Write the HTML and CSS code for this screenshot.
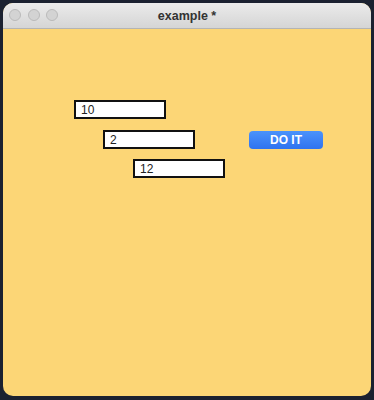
FILE: index.html
```html
<!DOCTYPE html>
<html>
<head>
    <title>example *</title>
    <meta name="viewport" content="width=device-width, initial-scale=1.0">
    <link rel="stylesheet" href="styles.css">
</head>
<body>
    <div class="window">
        <header class="titlebar">
            <div class="lights">
                <span class="light"></span>
                <span class="light"></span>
                <span class="light"></span>
            </div>
            <h1>example *</h1>
        </header>
        <main class="content">
            <div class="row row-1">
                <input class="field" type="text" value="10">
            </div>
            <div class="row row-2">
                <input class="field" type="text" value="2">
                <button class="action">DO IT</button>
            </div>
            <div class="row row-3">
                <input class="field" type="text" value="12">
            </div>
        </main>
    </div>
</body>
</html>
```

FILE: styles.css
```css
html, body {
    margin: 0;
    height: 100%;
}
body {
    background: #1b2130;
    font-family: "Liberation Sans", Arial, sans-serif;
    padding: 3px;
    box-sizing: border-box;
}
.window {
    width: 368px;
    height: 393px;
    border-radius: 10px;
    overflow: hidden;
    display: flex;
    flex-direction: column;
    background: #fcd676;
}
.titlebar {
    height: 25px;
    background: linear-gradient(#ebebeb, #d5d5d5);
    border-bottom: 1px solid #b4b4b4;
    display: flex;
    align-items: center;
    justify-content: center;
    position: relative;
}
.titlebar h1 {
    margin: 0;
    font-size: 12.5px;
    font-weight: bold;
    color: #333;
}
.lights {
    position: absolute;
    left: 6px;
    top: 6px;
    display: flex;
    gap: 6.5px;
}
.light {
    width: 10px;
    height: 10px;
    border-radius: 50%;
    background: #d3d3d3;
    border: 1px solid #bababa;
}
.content {
    flex: 1;
    padding-top: 71px;
}
.row {
    display: flex;
    align-items: center;
    height: 19px;
}
.row-1 {
    margin-left: 71px;
}
.row-2 {
    margin-left: 100px;
    margin-top: 11px;
}
.row-3 {
    margin-left: 130px;
    margin-top: 10px;
}
.field {
    width: 92px;
    height: 19px;
    box-sizing: border-box;
    border: 2px solid #111;
    background: #fff;
    padding: 0 0 0 5px;
    margin: 0;
    font-family: "Liberation Sans", Arial, sans-serif;
    font-size: 12px;
    color: #222;
    outline: none;
}
.action {
    margin-left: 54px;
    width: 74px;
    height: 18px;
    padding: 0;
    border: none;
    border-radius: 4px;
    background: linear-gradient(#4b93fb, #2f73f0);
    color: #fff;
    font-family: "Liberation Sans", Arial, sans-serif;
    font-size: 12px;
    font-weight: bold;
}
```
